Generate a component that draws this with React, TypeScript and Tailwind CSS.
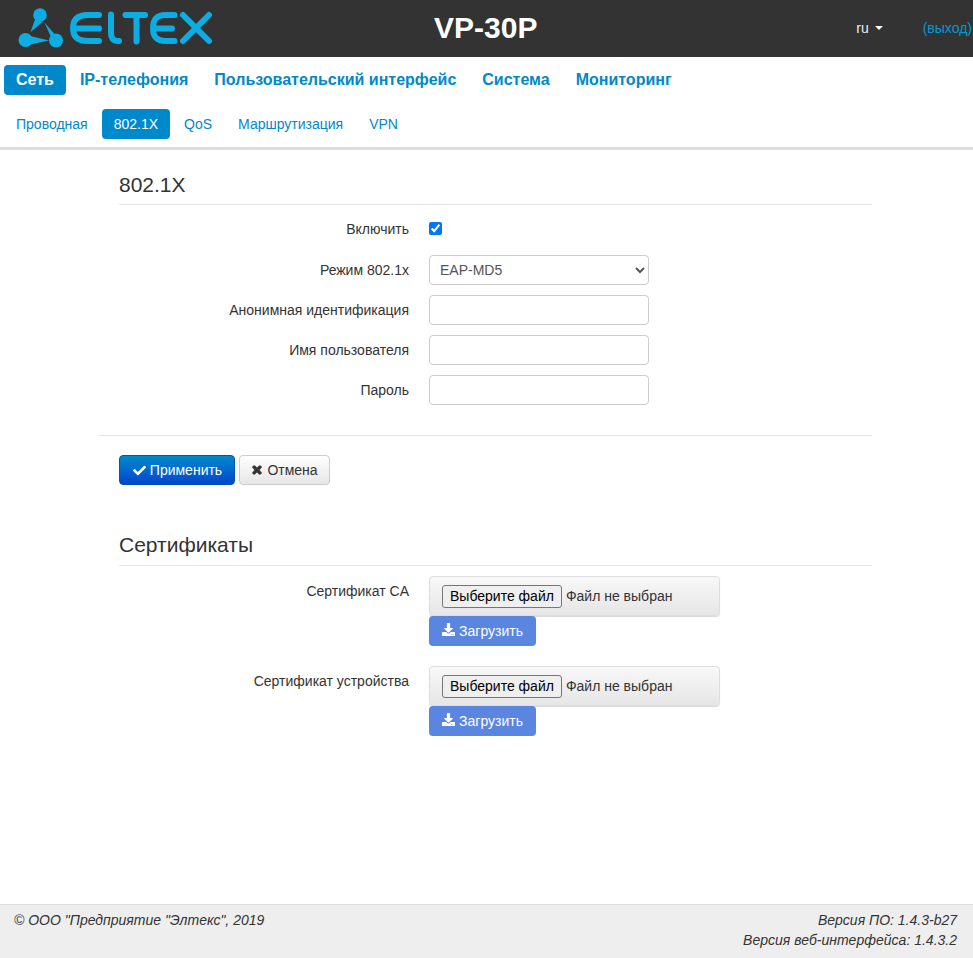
import { FaCheck, FaDownload, FaTimes } from "react-icons/fa"

function Logo() {
  return (
    <svg width="200" height="48" viewBox="18 6 200 48" fill="none" className="ml-[18px] mt-[6px]">
      <g fill="#0cade3">
        <circle cx="40" cy="15" r="6.8" />
        <circle cx="25.5" cy="40" r="7" />
        <circle cx="56" cy="40.5" r="7" />
        <path d="M35 19.5 L42 22 L38 26 L30.5 32 Z" />
        <path d="M44.5 22.5 L54.5 34 L50.5 36 Z" />
        <path d="M30 36 L30 44.5 L49 40.5 Z" />
      </g>
      <g stroke="#0cade3" strokeWidth="6" strokeLinecap="round" strokeLinejoin="round">
        <path d="M99 15 H88 C77 15 73 20 73 28 C73 36 77 41 88 41 H99 M75 28.5 H99" />
        <path d="M111 14.5 V32 C111 38 113 41 118 41 H119" />
        <path d="M125.5 15 H145 M136.5 15 V41.5" />
        <path d="M174.5 15 H166 C156 15 153 20 153 28 C153 36 156 41 166 41 H174.5 M155 28.5 H172" />
        <path d="M183 15 L209 41 M209 15 L183 41" />
      </g>
    </svg>
  )
}

function Field({ label, flush, children }: { label: string; flush?: boolean; children: React.ReactNode }) {
  return (
    <div className="flex">
      <label className={flush ? "w-[290px] shrink-0 text-right text-sm leading-5 text-[#333]" : "w-[290px] shrink-0 pt-[5px] text-right text-sm leading-5 text-[#333]"}>
        {label}
      </label>
      <div className="ml-5">{children}</div>
    </div>
  )
}

function TextInput({ type = "text" }: { type?: string }) {
  return <input type={type} className="block h-[30px] w-[220px] rounded border border-[#ccc] bg-white px-3 text-sm" />
}

function CertRow({ label }: { label: string }) {
  return (
    <Field label={label}>
      <div className="flex h-10 w-[291px] items-center rounded border border-[#ddd] bg-gradient-to-b from-[#f8f8f8] to-[#e6e6e6] pl-3 shadow-[0_1px_1px_rgba(0,0,0,0.15)]">
        <span className="rounded-[3px] border border-[#767676] bg-[#efefef] px-[7px] py-px text-sm leading-[19px] text-black">
          Выберите файл
        </span>
        <span className="ml-1 text-sm text-[#333]">Файл не выбран</span>
      </div>
      <button className="flex h-[30px] w-[107px] items-center justify-center gap-1 rounded bg-[#5b86e0] pb-px text-sm text-white">
        <FaDownload className="size-[13px] -translate-y-px" />
        Загрузить
      </button>
    </Field>
  )
}

export default function App() {
  return (
    <div className="flex min-h-screen flex-col bg-white font-['Liberation_Sans',sans-serif] text-sm">
      <header className="relative flex h-[57px] bg-[#333]">
        <Logo />
        <h1 className="absolute left-[434px] top-[10px] text-[30px] font-bold leading-9 text-white">VP-30P</h1>
        <div className="absolute right-[1px] top-[18px] flex items-center text-sm leading-5">
          <span className="text-[#eee]">ru</span>
          <span className="ml-[6px] h-0 w-0 border-x-4 border-t-4 border-x-transparent border-t-white" />
          <span className="ml-[40px] text-[#0099d5]">(выход)</span>
        </div>
      </header>

      <nav className="flex gap-[2px] pl-1 pt-2 text-base font-bold text-[#0088cc]">
        <a className="rounded bg-[#0088cc] px-3 py-[5px] leading-5 text-white">Сеть</a>
        <a className="px-3 py-[5px] leading-5">IP-телефония</a>
        <a className="px-3 py-[5px] leading-5">Пользовательский интерфейс</a>
        <a className="px-3 py-[5px] leading-5">Система</a>
        <a className="px-3 py-[5px] leading-5">Мониторинг</a>
      </nav>
      <nav className="mt-[14px] flex gap-[2px] border-b-[3px] border-[#ddd] pb-2 pl-1 text-sm text-[#0088cc]">
        <a className="px-3 py-[5px] leading-5">Проводная</a>
        <a className="rounded bg-[#0088cc] px-3 py-[5px] leading-5 text-white">802.1X</a>
        <a className="px-3 py-[5px] leading-5">QoS</a>
        <a className="px-3 py-[5px] leading-5">Маршрутизация</a>
        <a className="px-3 py-[5px] leading-5">VPN</a>
      </nav>

      <main className="flex-1 pl-[99px] pr-[101px]">
        <div className="pl-5">
          <h2 className="mt-5 border-b border-[#e5e5e5] pb-[5px] text-[21px] leading-[29px] text-[#333]">802.1X</h2>
        </div>
        <div className="mt-[14px] flex flex-col gap-[10px] pl-5">
          <Field label="Включить" flush>
            <input type="checkbox" defaultChecked className="mt-[3px] block size-[13px]" />
          </Field>
          <div className="mt-[6px]">
            <Field label="Режим 802.1x">
              <select className="block h-[30px] w-[220px] rounded border border-[#ccc] bg-white pl-[6px] text-sm text-[#555]">
                <option>EAP-MD5</option>
              </select>
            </Field>
          </div>
          <Field label="Анонимная идентификация">
            <TextInput />
          </Field>
          <Field label="Имя пользователя">
            <TextInput />
          </Field>
          <Field label="Пароль">
            <TextInput type="password" />
          </Field>
        </div>

        <div className="mt-[30px] flex gap-1 border-t border-[#e5e5e5] pl-5 pt-[19px]">
          <button className="flex h-[30px] w-[116px] items-center justify-center gap-[4px] rounded border border-[#0055b3] bg-gradient-to-b from-[#0088cc] to-[#0044cc] pl-[1px] text-sm text-white">
            <FaCheck className="size-[13px]" />
            Применить
          </button>
          <button className="flex h-[30px] w-[91px] items-center justify-center gap-[4px] rounded border border-[#ccc] bg-gradient-to-b from-white to-[#e6e6e6] text-sm text-[#333]">
            <FaTimes className="size-[12px]" stroke="currentColor" strokeWidth={50} />
            Отмена
          </button>
        </div>

        <div className="pl-5">
          <h2 className="mt-[45px] border-b border-[#e5e5e5] pb-[6px] text-[21px] leading-[29px] text-[#333]">Сертификаты</h2>
        </div>
        <div className="mt-[10px] flex flex-col gap-5 pl-5">
          <CertRow label="Сертификат CA" />
          <CertRow label="Сертификат устройства" />
        </div>
      </main>

      <footer className="flex h-[54px] justify-between border-t border-[#ddd] bg-[#eee] pl-[14px] pr-4 pt-[5px] text-sm italic leading-5 text-[#333]">
        <span>© ООО "Предприятие "Элтекс", 2019</span>
        <div className="text-right">
          <div>Версия ПО: 1.4.3-b27</div>
          <div>Версия веб-интерфейса: 1.4.3.2</div>
        </div>
      </footer>
    </div>
  )
}
